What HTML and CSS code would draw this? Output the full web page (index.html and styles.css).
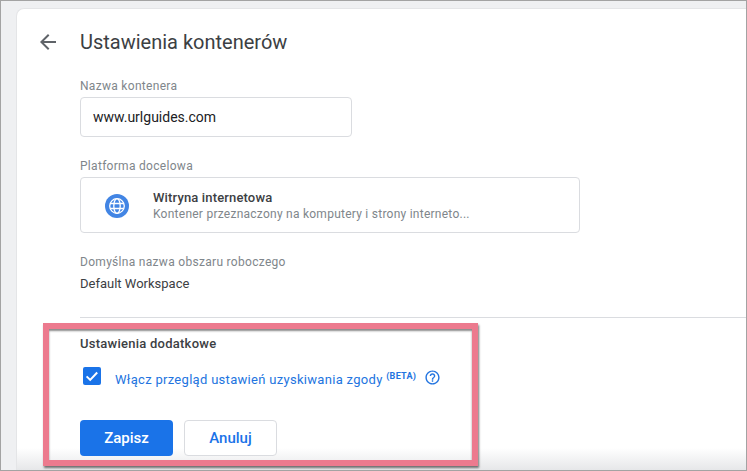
FILE: index.html
```html
<!DOCTYPE html>
<html lang="pl">
<head>
    <meta charset="UTF-8">
    <meta name="viewport" content="width=device-width, initial-scale=1.0">
    <title>Ustawienia kontenerów</title>
    <link rel="stylesheet" href="styles.css">
</head>
<body>

    <div class="window">
        <div class="card">

            <!-- Header -->
            <div class="header">
                <svg class="back-icon" viewBox="0 0 24 24" width="24" height="24">
                    <path d="M20 11H7.83l5.59-5.59L12 4l-8 8 8 8 1.41-1.41L7.83 13H20v-2z"/>
                </svg>
                <h1 class="title">Ustawienia kontenerów</h1>
            </div>

            <!-- Container name -->
            <div class="field-name">
                <p class="label">Nazwa kontenera</p>
                <div class="name-input">www.urlguides.com</div>
            </div>

            <!-- Target platform -->
            <div class="field-platform">
                <p class="label">Platforma docelowa</p>
                <div class="platform-box">
                    <svg class="globe-icon" viewBox="0 0 24 24" width="24" height="24">
                        <circle cx="12" cy="12" r="12" fill="#4285e4"/>
                        <g fill="none" stroke="#fff" stroke-width="1.3">
                            <circle cx="12" cy="12" r="7.3"/>
                            <ellipse cx="12" cy="12" rx="3.2" ry="7.3"/>
                            <path d="M5.2 9.5h13.6M5.2 14.5h13.6"/>
                        </g>
                    </svg>
                    <div class="platform-text">
                        <div class="platform-title">Witryna internetowa</div>
                        <div class="platform-desc">Kontener przeznaczony na komputery i strony interneto...</div>
                    </div>
                </div>
            </div>

            <!-- Workspace -->
            <div class="field-workspace">
                <p class="label">Domyślna nazwa obszaru roboczego</p>
                <p class="workspace-value">Default Workspace</p>
            </div>

            <hr class="divider">

            <!-- Additional settings -->
            <div class="extra">
                <h2 class="extra-title">Ustawienia dodatkowe</h2>
                <div class="consent-row">
                    <span class="checkbox">
                        <svg viewBox="0 0 18 18" width="18" height="18">
                            <path d="M3.6 9.4l3.6 3.5 7-7.4" fill="none" stroke="#fff" stroke-width="2"/>
                        </svg>
                    </span>
                    <span class="consent-text">Włącz przegląd ustawień uzyskiwania zgody <sup class="beta">(BETA)</sup></span>
                    <svg class="help-icon" viewBox="0 0 24 24" width="17" height="17">
                        <path d="M11 18h2v-2h-2v2zm1-16C6.48 2 2 6.48 2 12s4.480 10 10 10 10-4.480 10-10S17.520 2 12 2zm0 18c-4.410 0-8-3.590-8-8s3.590-8 8-8 8 3.590 8 8-3.590 8-8 8zm0-14c-2.210 0-4 1.790-4 4h2c0-1.100.9-2 2-2s2 .9 2 2c0 2-3 1.750-3 5h2c0-2.250 3-2.500 3-5 0-2.210-1.790-4-4-4z"/>
                    </svg>
                </div>
                <div class="buttons">
                    <button class="btn-save">Zapisz</button>
                    <button class="btn-cancel">Anuluj</button>
                </div>
            </div>

        </div>

        <div class="highlight"></div>
    </div>

</body>
</html>
```

FILE: styles.css
```css
* {
    box-sizing: border-box;
}

body {
    margin: 0;
    font-family: Roboto, "Liberation Sans", sans-serif;
    background-color: #fff;
}

.window {
    position: relative;
    width: 747px;
    height: 471px;
    overflow: hidden;
    padding: 7px 0 0 15px;
    background-color: #eff0f2;
    border: 1px solid #a3a3a3;
}

.card {
    height: 462px;
    padding-top: 16px;
    background: #fff linear-gradient(rgba(230, 231, 233, 0), #e6e7e9) no-repeat bottom / 100% 22px;
    border-top-left-radius: 8px;
    border-left: 1px solid #e4e5e7;
    border-top: 1px solid #e4e5e7;
}

.header {
    display: flex;
    align-items: center;
    height: 34px;
    padding-left: 19px;
}

.back-icon {
    fill: #5f6368;
    flex-shrink: 0;
}

.title {
    margin: 0 0 0 20px;
    font-size: 20px;
    font-weight: 400;
    color: #3c4043;
}

.label {
    margin: 0;
    font-size: 12px;
    line-height: 16px;
    letter-spacing: 0.3px;
    color: #80868b;
}

.field-name,
.field-platform,
.field-workspace,
.extra {
    padding-left: 63px;
}

.field-name {
    margin-top: 19px;
}

.name-input {
    width: 272px;
    height: 40px;
    margin-top: 3px;
    padding-left: 12px;
    font-size: 14px;
    line-height: 38px;
    color: #202124;
    border: 1px solid #dadce0;
    border-radius: 4px;
}

.field-platform {
    margin-top: 21px;
}

.platform-box {
    display: flex;
    align-items: center;
    width: 500px;
    height: 56px;
    margin-top: 3px;
    padding-left: 24px;
    border: 1px solid #dadce0;
    border-radius: 4px;
}

.globe-icon {
    flex-shrink: 0;
    margin-top: 2px;
}

.platform-text {
    margin-left: 24px;
}

.platform-title {
    font-size: 13px;
    line-height: 17px;
    font-weight: 500;
    letter-spacing: 0.15px;
    color: #3c4043;
}

.platform-desc {
    font-size: 12px;
    line-height: 16px;
    letter-spacing: 0.25px;
    color: #80868b;
}

.field-workspace {
    margin-top: 21px;
}

.workspace-value {
    margin: 6px 0 0;
    font-size: 13px;
    line-height: 16px;
    color: #3c4043;
}

.divider {
    height: 1px;
    margin: 25px 0 0 63px;
    border: 0;
    background-color: #dadce0;
}

.extra-title {
    margin: 18px 0 0;
    font-size: 13px;
    line-height: 16px;
    font-weight: 500;
    letter-spacing: 0.25px;
    color: #3c4043;
}

.consent-row {
    display: flex;
    align-items: center;
    height: 20px;
    margin-top: 14px;
}

.checkbox {
    display: flex;
    width: 18px;
    height: 18px;
    margin-left: 3px;
    background-color: #1a73e8;
    border-radius: 2px;
}

.consent-text {
    margin-left: 14px;
    padding-top: 6px;
    font-size: 13px;
    letter-spacing: 0.3px;
    color: #2274e0;
}

.beta {
    font-size: 9px;
    font-weight: 700;
    line-height: 0;
    vertical-align: 5px;
}

.help-icon {
    margin: 2px 0 0 8px;
    fill: #2274e0;
}

.buttons {
    display: flex;
    gap: 11px;
    margin-top: 34px;
}

.btn-save,
.btn-cancel {
    width: 93px;
    height: 36px;
    font-family: inherit;
    font-size: 15px;
    font-weight: 500;
    border-radius: 4px;
}

.btn-save {
    color: #fff;
    background-color: #1a73e8;
    border: none;
}

.btn-cancel {
    color: #1a73e8;
    background-color: #fff;
    border: 1px solid #dadce0;
}

/* annotation drawn over the screenshot */
.highlight {
    position: absolute;
    left: 42px;
    top: 322px;
    width: 435px;
    height: 143px;
    border: 6px solid #ec7a8e;
    box-shadow: 1px 2px 2px rgba(60, 60, 60, 0.7), inset 0 2px 2px rgba(60, 60, 60, 0.6);
}
```
